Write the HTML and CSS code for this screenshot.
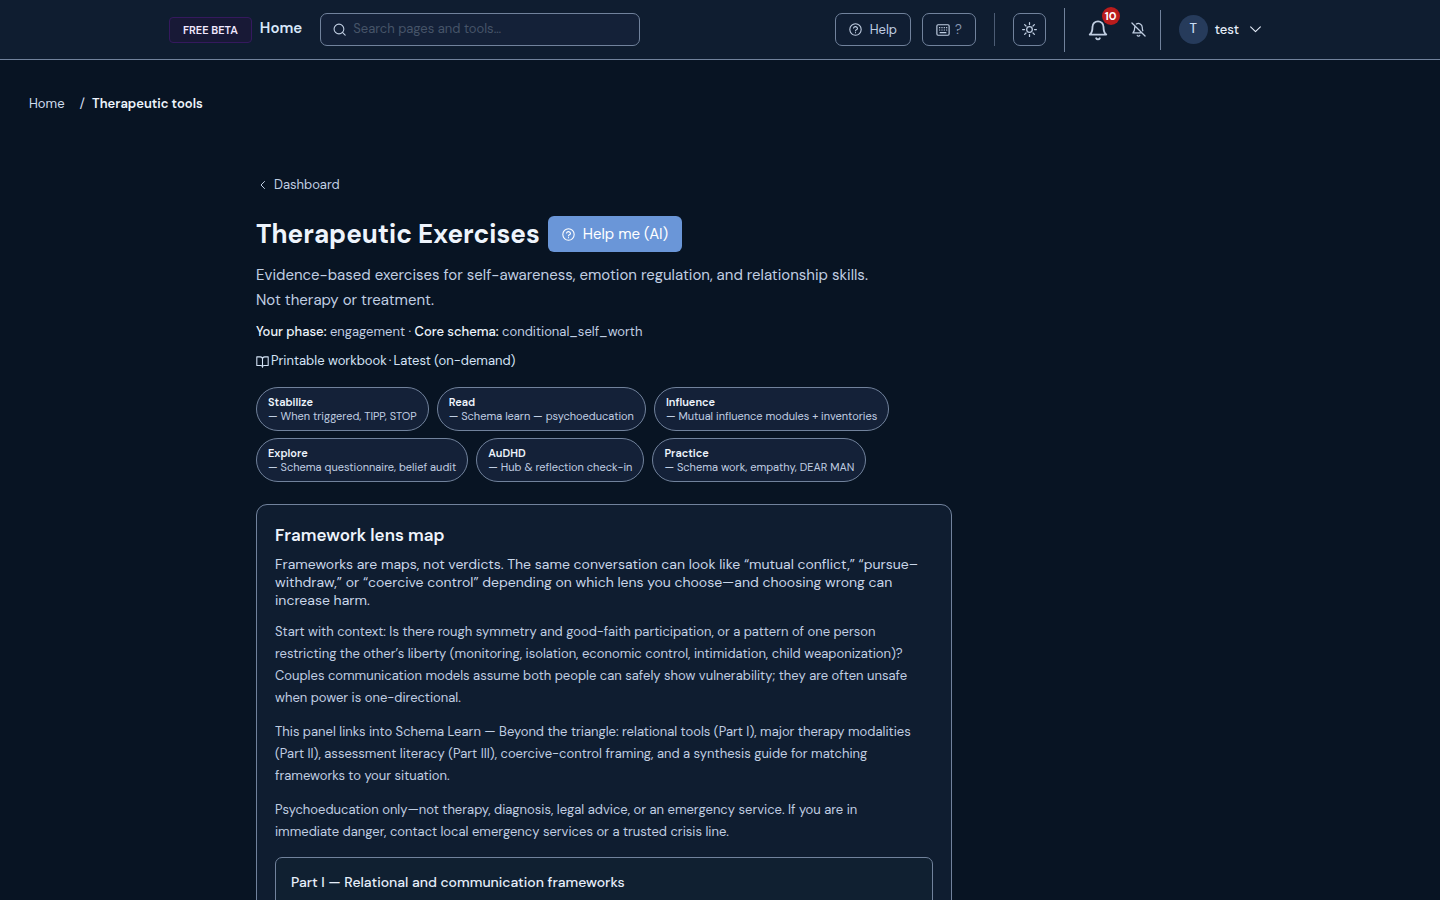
FILE: index.html
```html
<!DOCTYPE html>
<html lang="en">
<head>
<meta charset="utf-8">
<meta name="viewport" content="width=device-width, initial-scale=1">
<title>Therapeutic Exercises</title>
<link rel="stylesheet" href="styles.css">
</head>
<body>
<svg class="sprite" aria-hidden="true">
  <symbol id="help" viewBox="0 0 24 24"><circle cx="12" cy="12" r="10.5"/><path d="M8.300 9.300a3.800 3.800 0 0 1 7.400.7c0 2.500-3.700 2.600-3.700 4.500M12 17.800v.2"/></symbol>
</svg>
<header class="topbar">
  <div class="topbar-inner">
    <span class="beta">FREE BETA</span>
    <a class="brand" href="#">Home</a>
    <label class="search">
      <svg class="icon" viewBox="0 0 24 24"><circle cx="11" cy="11" r="9"/><path d="m22.500 22.500-5-5"/></svg>
      <input type="search" placeholder="Search pages and tools…" aria-label="Search pages and tools">
    </label>
    <div class="actions">
      <button class="btn" type="button"><svg class="icon"><use href="#help"/></svg>Help</button>
      <button class="btn keys" type="button" aria-label="Keyboard shortcuts"><svg class="icon" viewBox="0 0 24 24"><rect x="1.5" y="3" width="21" height="18" rx="2"/><path d="M6 8h.5M10 8h.5M14 8h.5M18 8h.5M6 12h.5M10 12h.5M14 12h.5M18 12h.5M7 16.500h10"/></svg><span>?</span></button>
      <span class="rule rule-short"></span>
      <button class="btn theme" type="button" aria-label="Toggle theme"><svg class="icon sun" viewBox="0 0 24 24"><circle cx="12" cy="12" r="4.500"/><path d="M12 1v3M12 20v3M1 12h3M20 12h3M4.200 4.200l2.200 2.200M17.600 17.600l2.200 2.200M4.200 19.800l2.200-2.200M17.600 6.400l2.200-2.200"/></svg></button>
      <span class="rule rule-tall"></span>
      <button class="plain bell" type="button" aria-label="Notifications"><svg class="icon" viewBox="0 0 24 24"><path d="M6 8.500a6 6 0 0 1 12 0c0 6.500 3 8.500 3 8.500H3s3-2 3-8.500M10 21a2.300 2.300 0 0 0 4 0"/></svg><span class="count">10</span></button>
      <button class="plain mute" type="button" aria-label="Mute notifications"><svg class="icon" viewBox="0 0 24 24"><path d="M8.500 3.200A6.300 6.300 0 0 1 18 8.500c0 2.300.4 4.200.9 5.500M17 17.500H3s3-2.500 3-9c0-.8.100-1.500.4-2.200M10 21.500a2.300 2.300 0 0 0 4 0M1.500 1.500l21 21"/></svg></button>
      <span class="rule rule-user"></span>
      <button class="plain user" type="button"><span class="avatar">T</span><span>test</span><svg class="icon chevron" viewBox="0 0 12 12"><path d="m1.500 3.500 4.500 4.500 4.500-4.500"/></svg></button>
    </div>
  </div>
</header>
<nav class="crumbs" aria-label="Breadcrumb">
  <a href="#">Home</a><span class="slash">/</span><strong>Therapeutic tools</strong>
</nav>
<main class="page">
  <a class="back" href="#"><svg class="icon" viewBox="0 0 14 14"><path d="M8.500 3.500 5 7l3.500 3.500"/></svg>Dashboard</a>
  <div class="heading">
    <h1>Therapeutic Exercises</h1>
    <button class="primary" type="button"><svg class="icon"><use href="#help"/></svg>Help me (AI)</button>
  </div>
  <p class="lead">Evidence-based exercises for self-awareness, emotion regulation, and relationship skills.<br>Not therapy or treatment.</p>
  <p class="meta"><strong>Your phase:</strong> engagement · <strong>Core schema:</strong> conditional_self_worth</p>
  <p class="workbook"><svg class="icon" viewBox="0 0 24 24"><path d="M12 6v16M1.500 3.500H8a4 4 0 0 1 4 4 4 4 0 0 1 4-4h6.500v16H15a3 3 0 0 0-3 3 3 3 0 0 0-3-3H1.500z"/></svg><a href="#">Printable workbook</a><span>·</span><a href="#">Latest (on-demand)</a></p>
  <div class="pills">
    <a class="pill" href="#"><strong>Stabilize</strong><span>— When triggered, TIPP, STOP</span></a>
    <a class="pill" href="#"><strong>Read</strong><span>— Schema learn — psychoeducation</span></a>
    <a class="pill" href="#"><strong>Influence</strong><span>— Mutual influence modules + inventories</span></a>
    <a class="pill" href="#"><strong>Explore</strong><span>— Schema questionnaire, belief audit</span></a>
    <a class="pill" href="#"><strong>AuDHD</strong><span>— Hub &amp; reflection check-in</span></a>
    <a class="pill" href="#"><strong>Practice</strong><span>— Schema work, empathy, DEAR MAN</span></a>
  </div>
  <section class="card">
    <h2>Framework lens map</h2>
    <p class="intro">Frameworks are maps, not verdicts. The same conversation can look like “mutual conflict,” “pursue–<br>withdraw,” or “coercive control” depending on which lens you choose—and choosing wrong can<br>increase harm.</p>
    <div class="notes">
      <p>Start with context: Is there rough symmetry and good-faith participation, or a pattern of one person<br>restricting the other’s liberty (monitoring, isolation, economic control, intimidation, child weaponization)?<br>Couples communication models assume both people can safely show vulnerability; they are often unsafe<br>when power is one-directional.</p>
      <p>This panel links into Schema Learn — Beyond the triangle: relational tools (Part I), major therapy modalities<br>(Part II), assessment literacy (Part III), coercive-control framing, and a synthesis guide for matching<br>frameworks to your situation.</p>
      <p>Psychoeducation only—not therapy, diagnosis, legal advice, or an emergency service. If you are in<br>immediate danger, contact local emergency services or a trusted crisis line.</p>
    </div>
    <section class="part"><h3>Part I — Relational and communication frameworks</h3></section>
  </section>
</main>
</body>
</html>
```
FILE: styles.css
```css
* { box-sizing: border-box; }
html { scrollbar-width: none; }
body {
  margin: 0;
  background: #081423;
  color: #c0cee2;
  font: 13px/20px "DM Sans", Inter, "Liberation Sans", sans-serif;
}
a { color: inherit; text-decoration: none; }
button, input { font: inherit; color: inherit; }
h1, h2, h3, p { margin: 0; }
strong { font-weight: 600; color: #eef4fc; }
.sprite { display: none; }
.icon {
  width: 13px;
  height: 13px;
  flex: none;
  fill: none;
  stroke: currentColor;
  stroke-width: 2;
  stroke-linecap: round;
  stroke-linejoin: round;
}

.topbar { background: #0f1d30; border-bottom: 1px solid #71829c; }
.topbar-inner {
  display: flex;
  align-items: center;
  max-width: 1104px;
  height: 59px;
  margin: 0 auto;
  padding: 0 10px 0 1px;
}
.beta {
  padding: 3px 13px;
  border: 1px solid #35195e;
  border-radius: 4px;
  background: #181936;
  color: #f1e8ff;
  font-size: 11px;
  font-weight: 600;
  line-height: 18px;
  white-space: nowrap;
}
.brand { margin-left: 8px; padding-bottom: 3px; color: #d8e8fa; font-size: 15px; font-weight: 600; }
.search {
  display: flex;
  align-items: center;
  gap: 7px;
  flex: 0 1 320px;
  height: 33px;
  margin-left: 18px;
  padding: 0 12px;
  border: 1px solid #71829c;
  border-radius: 7px;
  background: #142138;
}
.search input { flex: 1; min-width: 0; padding: 0 0 2px; border: 0; outline: 0; background: none; }
.search input::placeholder { color: #465468; opacity: 1; }
.actions { display: flex; align-items: center; margin-left: auto; }
.btn {
  display: flex;
  align-items: center;
  justify-content: center;
  gap: 8px;
  height: 33px;
  padding: 0 13px;
  border: 1px solid #71829c;
  border-radius: 7px;
  background: #101e33;
}
.keys { gap: 5px; margin-left: 11px; }
.keys span { color: #8797b0; }
.keys .icon { width: 14px; height: 14px; }
.theme { width: 33px; padding: 0; }
.sun { width: 15px; height: 15px; }
.rule { width: 1px; background: #71829c; }
.rule-short { height: 33px; margin: 0 18px; background: #4c5c74; }
.rule-tall { height: 44px; margin-left: 18px; }
.rule-user { height: 40px; margin: 0 18px 0 14px; }
.plain { display: flex; align-items: center; padding: 0; border: 0; background: none; }
.bell { position: relative; margin-left: 22px; }
.bell .icon { width: 22px; height: 22px; }
.count {
  position: absolute;
  top: -12px;
  right: -11px;
  width: 18px;
  height: 18px;
  border-radius: 50%;
  background: #b91c1c;
  color: #fff;
  font-size: 11px;
  font-weight: 700;
  line-height: 18px;
  text-align: center;
}
.mute { margin-left: 22px; }
.mute .icon { width: 15px; height: 15px; }
.user { gap: 7px; color: #e6eefa; font-weight: 500; }
.avatar { width: 29px; height: 29px; border-radius: 50%; background: #263b5b; color: #c9dcf5; line-height: 28px; }
.chevron { margin-left: 3px; stroke-width: 1; }

.crumbs { display: flex; padding: 34px 29px 0; color: #d0deef; }
.slash { margin: 0 7px 0 15px; font-size: 14px; line-height: 18px; }

.page { max-width: 928px; margin: 0 auto; padding-top: 62px; }
.page > * { max-width: 696px; }
.back { display: flex; align-items: center; gap: 4px; line-height: 18px; }
.back .icon { width: 14px; height: 14px; stroke-width: 1; }
.heading { display: flex; align-items: center; gap: 8px; margin-top: 22px; }
h1 { color: #eef4fc; font-size: 26px; font-weight: 700; line-height: 36px; }
.primary {
  display: flex;
  align-items: center;
  gap: 8px;
  height: 36px;
  padding: 0 14px;
  border: 0;
  border-radius: 6px;
  background: #6a96d8;
  color: #fff;
  font-size: 15px;
}
.lead { margin-top: 11px; font-size: 15px; line-height: 25px; }
.meta { margin-top: 9px; }
.meta strong { font-weight: 500; }
.workbook { display: flex; align-items: center; gap: 2px; margin-top: 9px; color: #d4e3f6; }
.pills { display: flex; flex-wrap: wrap; gap: 7px 8px; margin-top: 16px; }
.pill {
  display: flex;
  flex-direction: column;
  padding: 7px 11px;
  border: 1px solid #71829c;
  border-radius: 22px;
  background: #142138;
  font-size: 11px;
  line-height: 14px;
}
.card { margin-top: 22px; padding: 18px; border: 1px solid #71829c; border-radius: 11px; background: #0f1d30; }
h2 { color: #eef4fc; font-size: 17px; font-weight: 600; line-height: 24px; }
.intro { margin-top: 8px; font-size: 14px; line-height: 18px; color: #c9d6e9; }
.notes { display: grid; gap: 12px; margin-top: 12px; line-height: 22px; }
.part { margin-top: 14px; padding: 12px 15px 22px; border: 1px solid #71829c; border-radius: 7px; background: #102031; }
h3 { color: #e6eefa; font-size: 14px; font-weight: 500; line-height: 24px; }
```
